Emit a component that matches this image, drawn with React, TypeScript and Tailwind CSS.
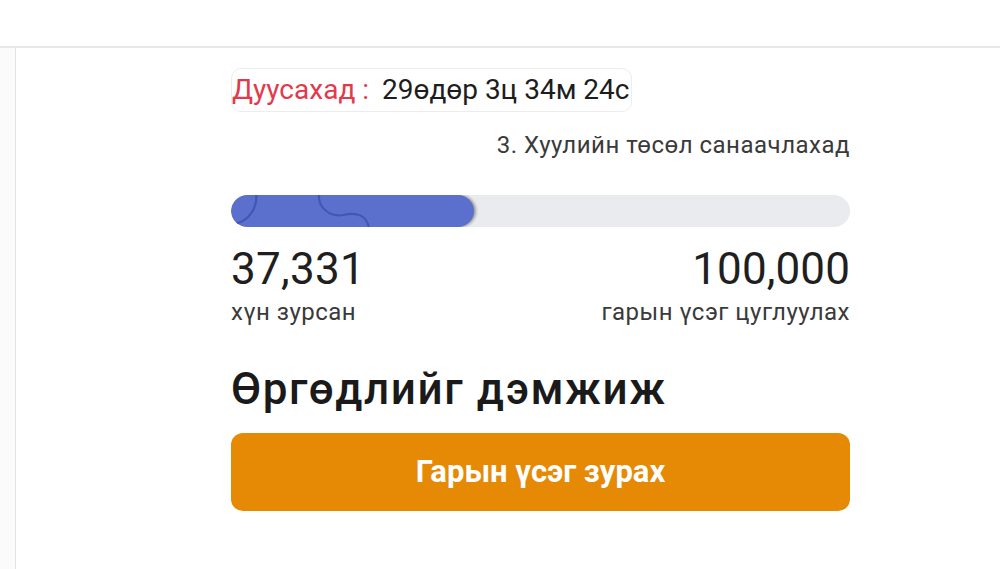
export default function App() {
  return (
    <div
      className="flex h-[569px] w-[1000px] flex-col overflow-hidden bg-white"
      style={{ fontFamily: "Roboto, 'Noto Sans', sans-serif" }}
    >
      <header className="h-[48px] shrink-0 border-b-2 border-[#e6e8ea] bg-white" />
      <div className="flex flex-1">
        <aside className="w-[16px] shrink-0 border-r border-[#e4e4e4] bg-[#fbfbfb]" />
        <main className="flex-1 pl-[215px] pr-[150px] pt-[20px]">
          <div className="inline-flex h-[44px] items-center gap-[13px] rounded-[10px] border border-[#ededed] pr-[2px] text-[28px] leading-none">
            <span className="text-[#e23a4c]">Дуусахад :</span>
            <span className="text-[#1d1d1d]">29өдөр 3ц 34м 24с</span>
          </div>
          <p className="mt-[18px] text-right text-[24px] leading-[30px] tracking-[0.5px] text-[#3a3a3a]">
            3. Хуулийн төсөл санаачлахад
          </p>
          <div className="relative mt-[35px] h-[32px] w-full overflow-hidden rounded-full bg-[#e9ebee]">
            <div className="relative h-full w-[39.3%] overflow-hidden rounded-full bg-[#5a70cc] shadow-[2px_0_3px_rgba(0,0,0,0.35)]">
              <svg
                className="absolute inset-0 h-full w-full"
                viewBox="0 0 243 32"
                preserveAspectRatio="none"
                fill="none"
                stroke="#4257b5"
                strokeWidth="2.2"
              >
                <path d="M25 -2 C27 12 18 26 4 29" />
                <path d="M88 -2 C86 14 100 22 112 20 C126 17 136 20 138 34" />
              </svg>
            </div>
          </div>
          <div className="mt-[17px] flex items-start justify-between text-[#1f1f1f]">
            <div>
              <div className="text-[44px] leading-[50px] tracking-[0.3px]">37,331</div>
              <div className="mt-[3px] text-[24px] leading-[30px] tracking-[0.5px] text-[#3a3a3a]">хүн зурсан</div>
            </div>
            <div className="text-right">
              <div className="text-[44px] leading-[50px] tracking-[0.1px]">100,000</div>
              <div className="mt-[3px] text-[24px] leading-[30px] tracking-[0.5px] text-[#3a3a3a]">гарын үсэг цуглуулах</div>
            </div>
          </div>
          <h2 className="mt-[35px] text-[44px] font-medium leading-[54px] tracking-[1.6px] text-[#1a1a1a]">
            Өргөдлийг дэмжиж
          </h2>
          <button className="mt-[17px] flex h-[78px] w-full items-center justify-center rounded-[12px] bg-[#e68a06] text-[31px] font-bold text-white">
            Гарын үсэг зурах
          </button>
        </main>
      </div>
    </div>
  );
}
